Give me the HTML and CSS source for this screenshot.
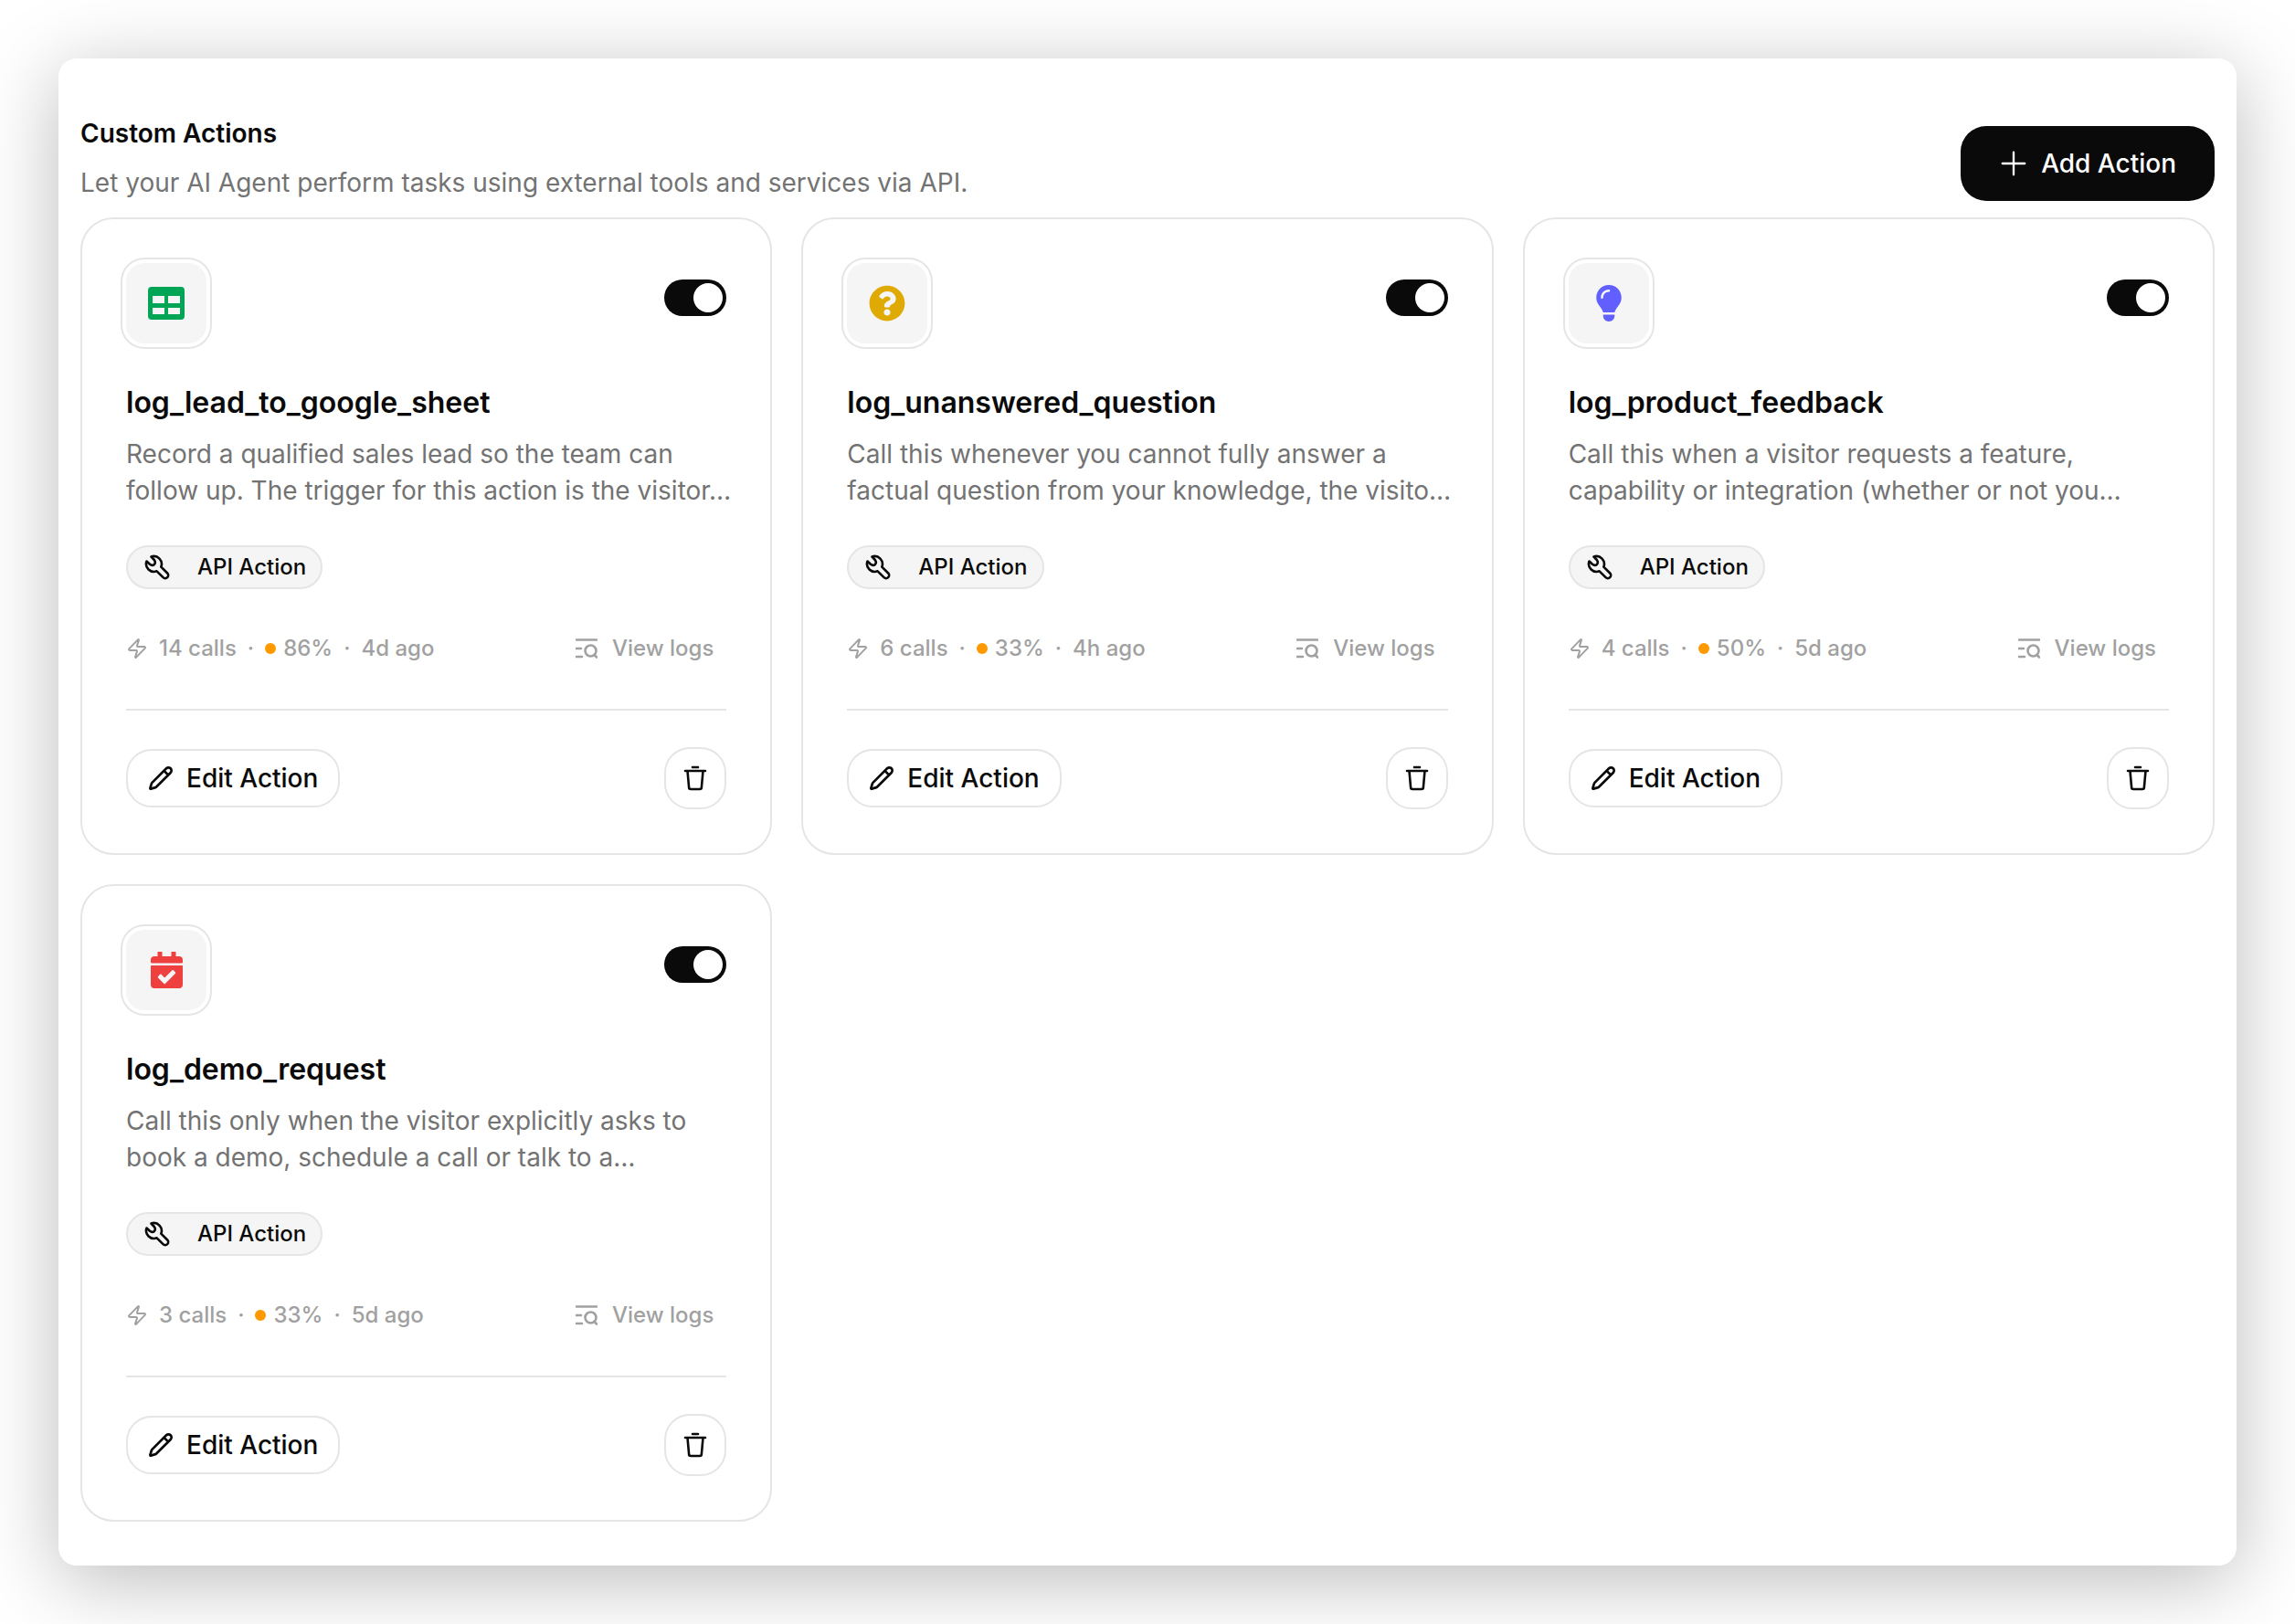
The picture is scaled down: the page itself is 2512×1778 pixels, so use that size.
FILE: index.html
```html
<!DOCTYPE html>
<html lang="en">
<head>
    <meta charset="UTF-8">
    <meta name="viewport" content="width=device-width, initial-scale=1.0">
    <title>Custom Actions</title>
    <link rel="stylesheet" href="styles.css">
</head>
<body>
    <!-- Shared icons -->
    <svg class="sprite" aria-hidden="true">
        <symbol id="plus" viewBox="0 0 24 24">
            <path d="M12 1.500v21M1.500 12h21"/>
        </symbol>
        <symbol id="wrench" viewBox="0 0 28 28">
            <path d="M7.500 2.500A8.500 8.500 0 0 1 18.300 13.600L25.200 20.500a3.300 3.300 0 0 1-4.700 4.700L13.600 18.300A8.500 8.500 0 0 1 2.500 7.500L6 10.800Q8.700 12.800 10.900 10.900Q12.800 8.700 10.800 6Z"/>
        </symbol>
        <symbol id="bolt" viewBox="0 0 24 24">
            <path d="M4 14a1 1 0 0 1-.78-1.63l9.9-10.2a.5.5 0 0 1 .86.46l-1.92 6.02A1 1 0 0 0 13 10h7a1 1 0 0 1 .78 1.63l-9.9 10.2a.5.5 0 0 1-.86-.46l1.92-6.02A1 1 0 0 0 11 14z"/>
        </symbol>
        <symbol id="logs" viewBox="0 0 24 24">
            <path d="M1 2.500h22M1 12h5M1 21h6M20.500 19l2.500 2.500"/>
            <circle cx="16.500" cy="14.500" r="6"/>
        </symbol>
        <symbol id="pencil" viewBox="0 0 24 24">
            <path d="M21.174 6.812a1 1 0 0 0-3.986-3.987L3.842 16.174a2 2 0 0 0-.5.83l-1.321 4.352a.5.5 0 0 0 .623.622l4.353-1.32a2 2 0 0 0 .83-.497zM15 5l4 4"/>
        </symbol>
        <symbol id="trash" viewBox="0 0 28 28">
            <path d="M11 2h6M3 6h22M5.500 6l1.600 18a2 2 0 0 0 2 2h9.800a2 2 0 0 0 2-2l1.600-18"/>
        </symbol>
    </svg>

    <main class="panel">
        <header class="panel-header">
            <div>
                <h1>Custom Actions</h1>
                <p>Let your AI Agent perform tasks using external tools and services via API.</p>
            </div>
            <button type="button" class="add-btn">
                <svg class="icon"><use href="#plus"/></svg>
                Add Action
            </button>
        </header>

        <section class="actions">
            <article class="card">
                <div class="card-top">
                    <div class="card-icon sheet">
                        <svg viewBox="0 0 40 40"><path fill-rule="evenodd" d="M4 2h32a4 4 0 0 1 4 4v28a4 4 0 0 1-4 4H4a4 4 0 0 1-4-4V6a4 4 0 0 1 4-4zM5 12v8h13v-8zM22 12v8h13v-8zM5 25v7h13v-7zM22 25v7h13v-7z"/></svg>
                    </div>
                    <input type="checkbox" role="switch" class="toggle" aria-label="Enable log_lead_to_google_sheet" checked>
                </div>
                <h2>log_lead_to_google_sheet</h2>
                <p class="desc">Record a qualified sales lead so the team can follow up. The trigger for this action is the visitor…</p>
                <span class="badge"><svg class="icon"><use href="#wrench"/></svg>API Action</span>
                <div class="stats">
                    <svg class="icon bolt"><use href="#bolt"/></svg>
                    <span>14 calls</span><span>·</span><span class="rate">86%</span><span>·</span><span>4d ago</span>
                    <a href="#" class="logs"><svg class="icon"><use href="#logs"/></svg>View logs</a>
                </div>
                <footer class="card-footer">
                    <button type="button" class="edit-btn"><svg class="icon"><use href="#pencil"/></svg>Edit Action</button>
                    <button type="button" class="delete-btn" aria-label="Delete log_lead_to_google_sheet"><svg class="icon"><use href="#trash"/></svg></button>
                </footer>
            </article>

            <article class="card">
                <div class="card-top">
                    <div class="card-icon question">
                        <svg viewBox="0 0 512 512"><path d="M504 256c0 136.997-111.043 248-248 248S8 392.997 8 256C8 119.083 119.043 8 256 8s248 111.083 248 248zM262.655 90c-54.497 0-89.255 22.957-116.549 63.758-3.536 5.286-2.353 12.415 2.715 16.258l34.699 26.31c5.205 3.947 12.621 3.008 16.665-2.122 17.864-22.658 30.113-35.797 57.303-35.797 20.429 0 45.698 13.148 45.698 32.958 0 14.976-12.363 22.667-32.534 33.976C247.128 238.528 216 254.941 216 296v4c0 6.627 5.373 12 12 12h56c6.627 0 12-5.373 12-12v-1.333c0-28.462 83.186-29.647 83.186-106.667 0-58.002-60.165-102-116.531-102zM256 338c-25.365 0-46 20.635-46 46 0 25.364 20.635 46 46 46s46-20.636 46-46c0-25.365-20.635-46-46-46z"/></svg>
                    </div>
                    <input type="checkbox" role="switch" class="toggle" aria-label="Enable log_unanswered_question" checked>
                </div>
                <h2>log_unanswered_question</h2>
                <p class="desc">Call this whenever you cannot fully answer a factual question from your knowledge, the visito…</p>
                <span class="badge"><svg class="icon"><use href="#wrench"/></svg>API Action</span>
                <div class="stats">
                    <svg class="icon bolt"><use href="#bolt"/></svg>
                    <span>6 calls</span><span>·</span><span class="rate">33%</span><span>·</span><span>4h ago</span>
                    <a href="#" class="logs"><svg class="icon"><use href="#logs"/></svg>View logs</a>
                </div>
                <footer class="card-footer">
                    <button type="button" class="edit-btn"><svg class="icon"><use href="#pencil"/></svg>Edit Action</button>
                    <button type="button" class="delete-btn" aria-label="Delete log_unanswered_question"><svg class="icon"><use href="#trash"/></svg></button>
                </footer>
            </article>

            <article class="card">
                <div class="card-top">
                    <div class="card-icon idea">
                        <svg viewBox="0 0 384 512"><path d="M272 384c9.600-31.900 29.500-59.100 49.200-86.200 5.200-7.100 10.400-14.200 15.400-21.400 19.800-28.500 31.400-63 31.400-100.300C368 78.800 289.200 0 192 0S16 78.800 16 176c0 37.300 11.600 71.900 31.400 100.300 5 7.200 10.200 14.300 15.400 21.400 19.800 27.100 39.700 54.400 49.200 86.200zM192 512c44.200 0 80-35.800 80-80v-16H112v16c0 44.200 35.800 80 80 80zM112 176c0 8.800-7.200 16-16 16s-16-7.200-16-16c0-61.900 50.100-112 112-112 8.800 0 16 7.200 16 16s-7.200 16-16 16c-44.200 0-80 35.800-80 80z"/></svg>
                    </div>
                    <input type="checkbox" role="switch" class="toggle" aria-label="Enable log_product_feedback" checked>
                </div>
                <h2>log_product_feedback</h2>
                <p class="desc">Call this when a visitor requests a feature, capability or integration (whether or not you…</p>
                <span class="badge"><svg class="icon"><use href="#wrench"/></svg>API Action</span>
                <div class="stats">
                    <svg class="icon bolt"><use href="#bolt"/></svg>
                    <span>4 calls</span><span>·</span><span class="rate">50%</span><span>·</span><span>5d ago</span>
                    <a href="#" class="logs"><svg class="icon"><use href="#logs"/></svg>View logs</a>
                </div>
                <footer class="card-footer">
                    <button type="button" class="edit-btn"><svg class="icon"><use href="#pencil"/></svg>Edit Action</button>
                    <button type="button" class="delete-btn" aria-label="Delete log_product_feedback"><svg class="icon"><use href="#trash"/></svg></button>
                </footer>
            </article>

            <article class="card">
                <div class="card-top">
                    <div class="card-icon demo">
                        <svg viewBox="0 0 448 512"><path d="M436 160H12c-6.627 0-12-5.373-12-12v-36c0-26.510 21.490-48 48-48h48V0h64v64h128V0h64v64h48c26.510 0 48 21.490 48 48v36c0 6.627-5.373 12-12 12zM12 192h424c6.627 0 12 5.373 12 12v260c0 26.510-21.490 48-48 48H48c-26.510 0-48-21.490-48-48V204c0-6.627 5.373-12 12-12zm333.296 95.947l-28.169-28.398c-4.667-4.705-12.265-4.736-16.970-.068L194.120 364.665l-45.980-46.352c-4.667-4.705-12.266-4.736-16.971-.068l-28.397 28.170c-4.705 4.667-4.736 12.265-.068 16.970l82.601 83.269c4.667 4.705 12.265 4.736 16.970.068l142.953-141.805c4.705-4.667 4.736-12.265.067-16.970z"/></svg>
                    </div>
                    <input type="checkbox" role="switch" class="toggle" aria-label="Enable log_demo_request" checked>
                </div>
                <h2>log_demo_request</h2>
                <p class="desc">Call this only when the visitor explicitly asks to book a demo, schedule a call or talk to a…</p>
                <span class="badge"><svg class="icon"><use href="#wrench"/></svg>API Action</span>
                <div class="stats">
                    <svg class="icon bolt"><use href="#bolt"/></svg>
                    <span>3 calls</span><span>·</span><span class="rate">33%</span><span>·</span><span>5d ago</span>
                    <a href="#" class="logs"><svg class="icon"><use href="#logs"/></svg>View logs</a>
                </div>
                <footer class="card-footer">
                    <button type="button" class="edit-btn"><svg class="icon"><use href="#pencil"/></svg>Edit Action</button>
                    <button type="button" class="delete-btn" aria-label="Delete log_demo_request"><svg class="icon"><use href="#trash"/></svg></button>
                </footer>
            </article>
        </section>
    </main>
</body>
</html>
```
FILE: styles.css
```css
* {
    box-sizing: border-box;
}

body {
    margin: 0;
    padding: 64px;
    background: #fff;
    color: #0a0a0a;
    font-family: Inter, sans-serif;
    font-size: 28px;
    line-height: 40px;
}

h1, h2, p {
    margin: 0;
}

button {
    font: inherit;
    font-weight: 500;
    color: inherit;
    cursor: pointer;
}

.sprite {
    position: absolute;
    width: 0;
    height: 0;
}

.icon {
    flex: none;
    width: 28px;
    height: 28px;
    fill: none;
    stroke: currentColor;
    stroke-width: 2;
    stroke-linecap: round;
    stroke-linejoin: round;
}

.panel {
    padding: 62px 24px 48px;
    background: #fff;
    border-radius: 20px;
    box-shadow: 0 16px 88px rgba(0, 0, 0, 0.27);
}

.panel-header {
    display: flex;
    justify-content: space-between;
    align-items: flex-end;
    margin-bottom: 18px;
}

.panel-header h1 {
    margin-bottom: 14px;
    font-size: 28px;
    font-weight: 600;
}

.panel-header p,
.desc {
    color: #737373;
}

.add-btn {
    display: flex;
    align-items: center;
    gap: 16px;
    height: 82px;
    padding: 0 42px 0 44px;
    background: #0a0a0a;
    color: #fff;
    border: none;
    border-radius: 28px;
}

.actions {
    display: grid;
    grid-template-columns: repeat(3, 1fr);
    gap: 32px;
}

.card {
    display: flex;
    flex-direction: column;
    align-items: stretch;
    padding: 48px;
    border: 2px solid #e5e5e5;
    border-radius: 36px;
}

.card-top {
    display: flex;
    justify-content: space-between;
    align-items: flex-start;
    margin-bottom: 45px;
}

.card-icon {
    display: flex;
    align-items: center;
    justify-content: center;
    width: 88px;
    height: 88px;
    background: #f5f5f5;
    border-radius: 20px;
    box-shadow: 0 0 0 4px #fff, 0 0 0 6px #e5e5e5;
}

.card-icon svg {
    height: 40px;
    fill: currentColor;
}

.sheet { color: #00a656; }
.question { color: #e0aa05; }
.idea { color: #615fff; }
.demo { color: #ef4040; }

.toggle {
    appearance: none;
    width: 68px;
    height: 40px;
    margin: 18px 0 0;
    padding: 4px;
    background: #d4d4d4;
    border-radius: 20px;
    cursor: pointer;
}

.toggle::before {
    content: "";
    display: block;
    width: 32px;
    height: 32px;
    background: #fff;
    border-radius: 50%;
}

.toggle:checked {
    background: #0a0a0a;
}

.toggle:checked::before {
    margin-left: auto;
}

.card h2 {
    margin-bottom: 16px;
    font-size: 32px;
    font-weight: 600;
}

/* runs slightly into the card padding so long lines keep their last word */
.desc {
    margin-right: -12px;
}

.badge {
    display: flex;
    align-items: center;
    align-self: flex-start;
    gap: 30px;
    height: 48px;
    margin: 40px 0 45px;
    padding: 0 16px 0 18px;
    background: #f5f5f5;
    border: 2px solid #e5e5e5;
    border-radius: 24px;
    font-size: 24px;
    font-weight: 500;
}

.badge .icon,
.delete-btn .icon,
.logs .icon {
    stroke-width: 2.6;
}

.edit-btn .icon {
    stroke-width: 2.3;
}

.stats {
    display: flex;
    align-items: center;
    gap: 12px;
    padding-bottom: 46px;
    border-bottom: 2px solid #e5e5e5;
    color: #a1a1a1;
    font-size: 24px;
    font-weight: 500;
}

.stats .icon {
    width: 24px;
    height: 24px;
}

.rate::before {
    content: "";
    display: inline-block;
    width: 12px;
    height: 12px;
    margin-right: 8px;
    background: #fe9a00;
    border-radius: 50%;
    vertical-align: 2px;
}

.logs {
    display: flex;
    align-items: center;
    gap: 16px;
    margin-left: auto;
    padding-right: 14px;
    color: inherit;
    text-decoration: none;
}

.card-footer {
    display: flex;
    justify-content: space-between;
    align-items: center;
    padding-top: 40px;
}

.edit-btn {
    display: flex;
    align-items: center;
    gap: 14px;
    height: 64px;
    padding: 0 22px;
    background: #fff;
    border: 2px solid #e5e5e5;
    border-radius: 28px;
}

.delete-btn {
    display: flex;
    align-items: center;
    justify-content: center;
    width: 68px;
    height: 68px;
    padding: 0;
    background: #fff;
    border: 2px solid #e5e5e5;
    border-radius: 28px;
}
```
